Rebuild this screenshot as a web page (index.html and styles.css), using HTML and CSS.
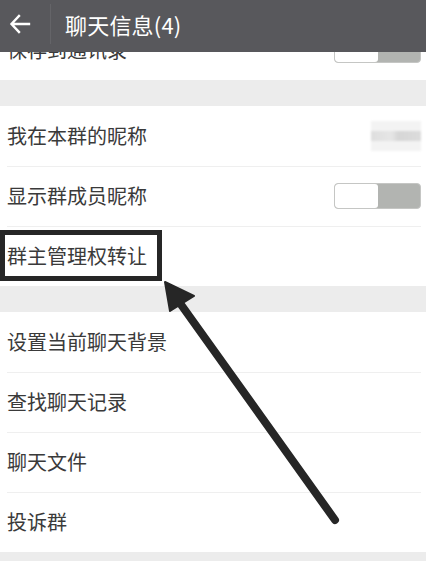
FILE: index.html
```html
<!DOCTYPE html>
<html lang="zh">
<head>
<meta charset="utf-8">
<link rel="stylesheet" href="styles.css">
</head>
<body>
<div class="page">
  <header class="topbar">
    <svg class="back" width="22" height="20" viewBox="0 0 22 20"><path d="M20 10H3M10 2L2.5 10L10 18" fill="none" stroke="#fff" stroke-width="2.4" stroke-linecap="square"/></svg>
    <span class="sep"></span>
    <span class="title">聊天信息(4)</span>
  </header>

  <section class="group first">
    <div class="row"><span class="label">保存到通讯录</span><span class="toggle"><span class="knob"></span></span></div>
  </section>

  <section class="group">
    <div class="row"><span class="label">我在本群的昵称</span><span class="blur"><span class="blur-bar"></span></span></div>
    <div class="row"><span class="label">显示群成员昵称</span><span class="toggle"><span class="knob"></span></span></div>
    <div class="row marked"><span class="label">群主管理权转让</span><span class="mark"></span></div>
  </section>

  <section class="group">
    <div class="row"><span class="label">设置当前聊天背景</span></div>
    <div class="row"><span class="label">查找聊天记录</span></div>
    <div class="row"><span class="label">聊天文件</span></div>
    <div class="row"><span class="label">投诉群</span></div>
  </section>

  <svg class="arrow" width="426" height="561" viewBox="0 0 426 561">
    <line x1="335" y1="520" x2="172" y2="292" stroke="#262626" stroke-width="8" stroke-linecap="round"/>
    <polygon points="165,282 194,296 170,311" fill="#262626" stroke="#262626" stroke-width="2" stroke-linejoin="round"/>
  </svg>
</div>
</body>
</html>
```

FILE: styles.css
```css
html, body {
  margin: 0;
  padding: 0;
}
body {
  width: 426px;
  height: 561px;
  overflow: hidden;
  background: #ececec;
  font-family: "Noto Sans CJK SC", "Noto Sans", sans-serif;
}
.page {
  position: relative;
  width: 426px;
  height: 561px;
  overflow: hidden;
  padding-top: 20px;
  box-sizing: border-box;
}
.topbar {
  position: absolute;
  top: 0;
  left: 0;
  right: 0;
  height: 52px;
  background: #58585c;
  display: flex;
  align-items: center;
  z-index: 5;
}
.back {
  margin-left: 9px;
  margin-top: -4px;
}
.sep {
  width: 1px;
  height: 40px;
  background: #646468;
  margin-left: 19px;
  margin-top: -4px;
}
.title {
  color: #fff;
  font-size: 22px;
  margin-left: 14px;
  margin-top: -5px;
  letter-spacing: 0.2px;
}
.group {
  background: #fff;
  margin-bottom: 26px;
}
.group.first {
  margin-bottom: 26px;
}
.row {
  position: relative;
  height: 60px;
  display: flex;
  align-items: center;
  justify-content: space-between;
  padding: 0 5px 0 7px;
}
.row + .row::before {
  content: "";
  position: absolute;
  top: 0;
  left: 7px;
  right: 5px;
  height: 1px;
  background: #efefef;
}
.label {
  font-size: 20px;
  color: #3a3a3a;
  line-height: 1;
}
.toggle {
  width: 85px;
  height: 24px;
  border: 1px solid #c5c6c4;
  border-radius: 4px;
  background: #b2b4b1;
  display: flex;
  overflow: hidden;
}
.knob {
  width: 43px;
  height: 100%;
  background: #fff;
  border-radius: 3px;
}
.blur {
  width: 50px;
  height: 30px;
  background: #f3f3f3;
  display: flex;
  align-items: center;
  filter: blur(1px);
}
.blur-bar {
  width: 50px;
  height: 10px;
  background: linear-gradient(90deg, #dedede 0%, #e6e6e6 40%, #d6d6d6 55%, #dcdcdc 100%);
}
.mark {
  position: absolute;
  left: 0;
  top: 4px;
  width: 162px;
  height: 51px;
  border: 5px solid #262626;
  box-sizing: border-box;
}
.arrow {
  position: absolute;
  top: 0;
  left: 0;
  z-index: 3;
  pointer-events: none;
}
```
